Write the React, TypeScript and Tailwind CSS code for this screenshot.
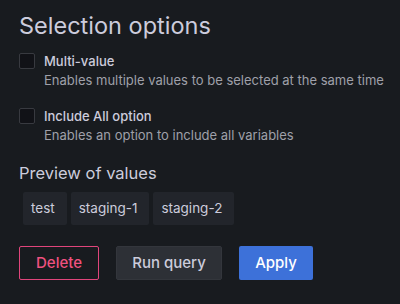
import React from 'react';

const options = [
  { label: 'Multi-value', desc: 'Enables multiple values to be selected at the same time' },
  { label: 'Include All option', desc: 'Enables an option to include all variables' },
];

const values = ['test', 'staging-1', 'staging-2'];

const App: React.FC = () => {
  return (
    <div className="w-[400px] h-[304px] bg-[#181b1f] text-[#ccccdc] font-['Inter',sans-serif] px-[19px] pt-[11px] overflow-hidden">
      <h3 className="text-[23.5px] leading-[30px] font-normal">Selection options</h3>

      <div className="mt-[11px] flex flex-col gap-[17px]">
        {options.map((o) => (
          <label key={o.label} className="flex items-start gap-[9px]">
            <span className="mt-[1px] w-[16px] h-[16px] rounded-[2px] border border-[#383a40] bg-[#111217] shrink-0" />
            <span className="flex flex-col whitespace-nowrap">
              <span className="text-[13px] leading-[18px] font-medium text-[#ccccdc]">{o.label}</span>
              <span className="text-[13px] leading-[20px] text-[#9fa0a9]">{o.desc}</span>
            </span>
          </label>
        ))}
      </div>

      <div className="mt-[16px] text-[16.5px] leading-[24px]">Preview of values</div>
      <div className="mt-[7px] ml-[4px] flex gap-[4px]">
        {values.map((v) => (
          <span key={v} className="h-[33px] pl-[8px] pr-[12px] flex items-center bg-[#22252b] rounded-[2px] text-[13.5px]">
            {v}
          </span>
        ))}
      </div>

      <div className="mt-[21px] flex gap-[17px]">
        <button className="h-[34px] w-[80px] rounded-[2px] border border-[#e0457b] text-[#f0517f] text-[15px] font-medium">
          Delete
        </button>
        <button className="h-[34px] w-[106px] rounded-[2px] border border-[#33363c] bg-[#2d3036] text-[#ccccdc] text-[15px] font-medium">
          Run query
        </button>
        <button className="h-[34px] w-[74px] rounded-[2px] bg-[#3d71d9] text-white text-[15px] font-medium">
          Apply
        </button>
      </div>
    </div>
  );
};

export default App;
